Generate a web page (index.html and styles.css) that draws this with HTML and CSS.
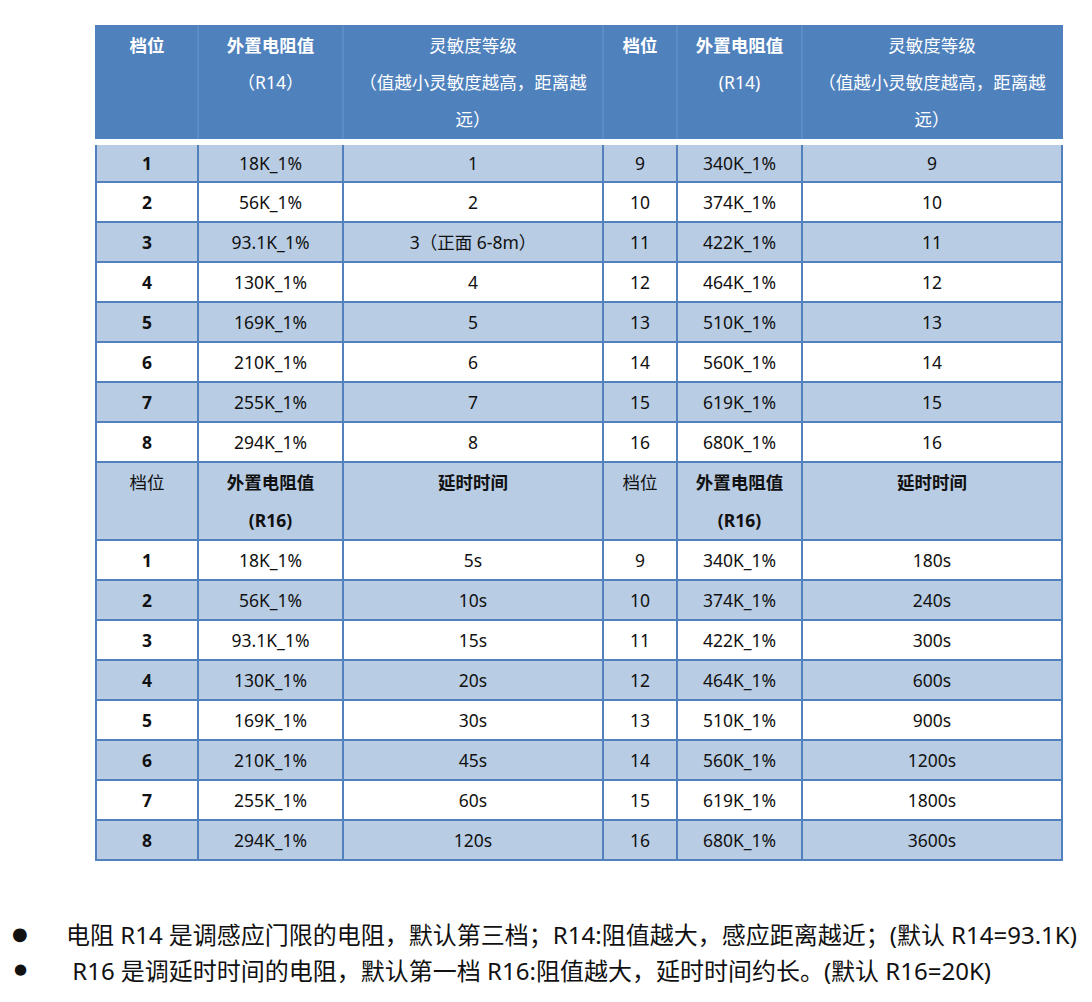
FILE: index.html
```html
<!DOCTYPE html>
<html lang="zh-CN">
<head>
<meta charset="utf-8">
<title>档位表</title>
<link rel="stylesheet" href="styles.css">
</head>
<body>
<div class="page">
  <table class="spec">
    <colgroup>
      <col class="c1"><col class="c2"><col class="c3"><col class="c4"><col class="c5"><col class="c6">
    </colgroup>
    <tr class="head-a">
      <td class="b">档位</td>
      <td class="b">外置电阻值<br><span class="n">（R14）</span></td>
      <td>灵敏度等级<br>（值越小灵敏度越高，距离越<br>远）</td>
      <td class="b">档位</td>
      <td class="b">外置电阻值<br><span class="n">(R14)</span></td>
      <td>灵敏度等级<br>（值越小灵敏度越高，距离越<br>远）</td>
    </tr>
    <tr class="alt"><td class="b">1</td><td>18K_1%</td><td>1</td><td>9</td><td>340K_1%</td><td>9</td></tr>
    <tr><td class="b">2</td><td>56K_1%</td><td>2</td><td>10</td><td>374K_1%</td><td>10</td></tr>
    <tr class="alt"><td class="b">3</td><td>93.1K_1%</td><td>3（正面 6-8m）</td><td>11</td><td>422K_1%</td><td>11</td></tr>
    <tr><td class="b">4</td><td>130K_1%</td><td>4</td><td>12</td><td>464K_1%</td><td>12</td></tr>
    <tr class="alt"><td class="b">5</td><td>169K_1%</td><td>5</td><td>13</td><td>510K_1%</td><td>13</td></tr>
    <tr><td class="b">6</td><td>210K_1%</td><td>6</td><td>14</td><td>560K_1%</td><td>14</td></tr>
    <tr class="alt"><td class="b">7</td><td>255K_1%</td><td>7</td><td>15</td><td>619K_1%</td><td>15</td></tr>
    <tr><td class="b">8</td><td>294K_1%</td><td>8</td><td>16</td><td>680K_1%</td><td>16</td></tr>
    <tr class="head-b alt">
      <td>档位</td>
      <td class="m">外置电阻值<br><span class="b">(R16)</span></td>
      <td class="b">延时时间</td>
      <td>档位</td>
      <td class="m">外置电阻值<br><span class="b">(R16)</span></td>
      <td class="b">延时时间</td>
    </tr>
    <tr><td class="b">1</td><td>18K_1%</td><td>5s</td><td>9</td><td>340K_1%</td><td>180s</td></tr>
    <tr class="alt"><td class="b">2</td><td>56K_1%</td><td>10s</td><td>10</td><td>374K_1%</td><td>240s</td></tr>
    <tr><td class="b">3</td><td>93.1K_1%</td><td>15s</td><td>11</td><td>422K_1%</td><td>300s</td></tr>
    <tr class="alt"><td class="b">4</td><td>130K_1%</td><td>20s</td><td>12</td><td>464K_1%</td><td>600s</td></tr>
    <tr><td class="b">5</td><td>169K_1%</td><td>30s</td><td>13</td><td>510K_1%</td><td>900s</td></tr>
    <tr class="alt"><td class="b">6</td><td>210K_1%</td><td>45s</td><td>14</td><td>560K_1%</td><td>1200s</td></tr>
    <tr><td class="b">7</td><td>255K_1%</td><td>60s</td><td>15</td><td>619K_1%</td><td>1800s</td></tr>
    <tr class="alt"><td class="b">8</td><td>294K_1%</td><td>120s</td><td>16</td><td>680K_1%</td><td>3600s</td></tr>
  </table>

  <ul class="notes">
    <li><span class="dot">●</span><span class="txt">电阻 R14 是调感应门限的电阻，默认第三档；R14:阻值越大，感应距离越近；(默认 R14=93.1K)</span></li>
    <li><span class="dot small">●</span><span class="txt">&nbsp;R16 是调延时时间的电阻，默认第一档 R16:阻值越大，延时时间约长。(默认 R16=20K)</span></li>
  </ul>
</div>
</body>
</html>
```

FILE: styles.css
```css
* { box-sizing: border-box; }
html, body { margin: 0; padding: 0; background: #fff; }
body {
  font-family: "Noto Sans", "Noto Sans CJK SC", sans-serif;
  color: #111;
}
.page { padding: 25px 0 0 0; width: 1092px; }

.spec {
  margin-left: 95px;
  width: 966px;
  table-layout: fixed;
  border-collapse: collapse;
  font-size: 17.5px;
}
.c1 { width: 102px; }
.c2 { width: 145px; }
.c3 { width: 260px; }
.c4 { width: 74px; }
.c5 { width: 125px; }
.c6 { width: 260px; }

.spec td {
  text-align: center;
  vertical-align: middle;
  padding: 0;
  height: 40px;
  border: 2px solid #5381bd;
  line-height: 20px;
}
.spec tr.alt td { background: #b8cce4; }

.spec .b { font-weight: 700; }
.spec .n { font-weight: 400; }
.spec .m { font-weight: 600; }

.head-a td {
  background: #4f81bd;
  color: #fff;
  vertical-align: top;
  line-height: 37px;
  padding-top: 2px;
  height: 117px;
  border-top: 0;
  border-left-color: #5a8cc6;
  border-right-color: #5a8cc6;
  border-bottom: 6px solid #fff;
}
.head-a td:first-child { border-left: 2px solid #4f81bd; }
.head-a td:last-child { border-right: 2px solid #5381bd; }

.head-b td {
  vertical-align: top;
  line-height: 38px;
  height: 70px;
  padding-top: 0;
}

.notes {
  list-style: none;
  margin: 54px 0 0 0;
  padding: 0;
  font-size: 24px;
  color: #111;
}
.notes li {
  display: flex;
  align-items: center;
  height: 36px;
}
.dot {
  width: 66px;
  flex: none;
  padding-left: 12px;
  font-size: 18px;
  font-family: "DejaVu Sans", sans-serif;
}
.dot.small { font-size: 15px; padding-left: 14px; }
.txt { white-space: nowrap; }
```
